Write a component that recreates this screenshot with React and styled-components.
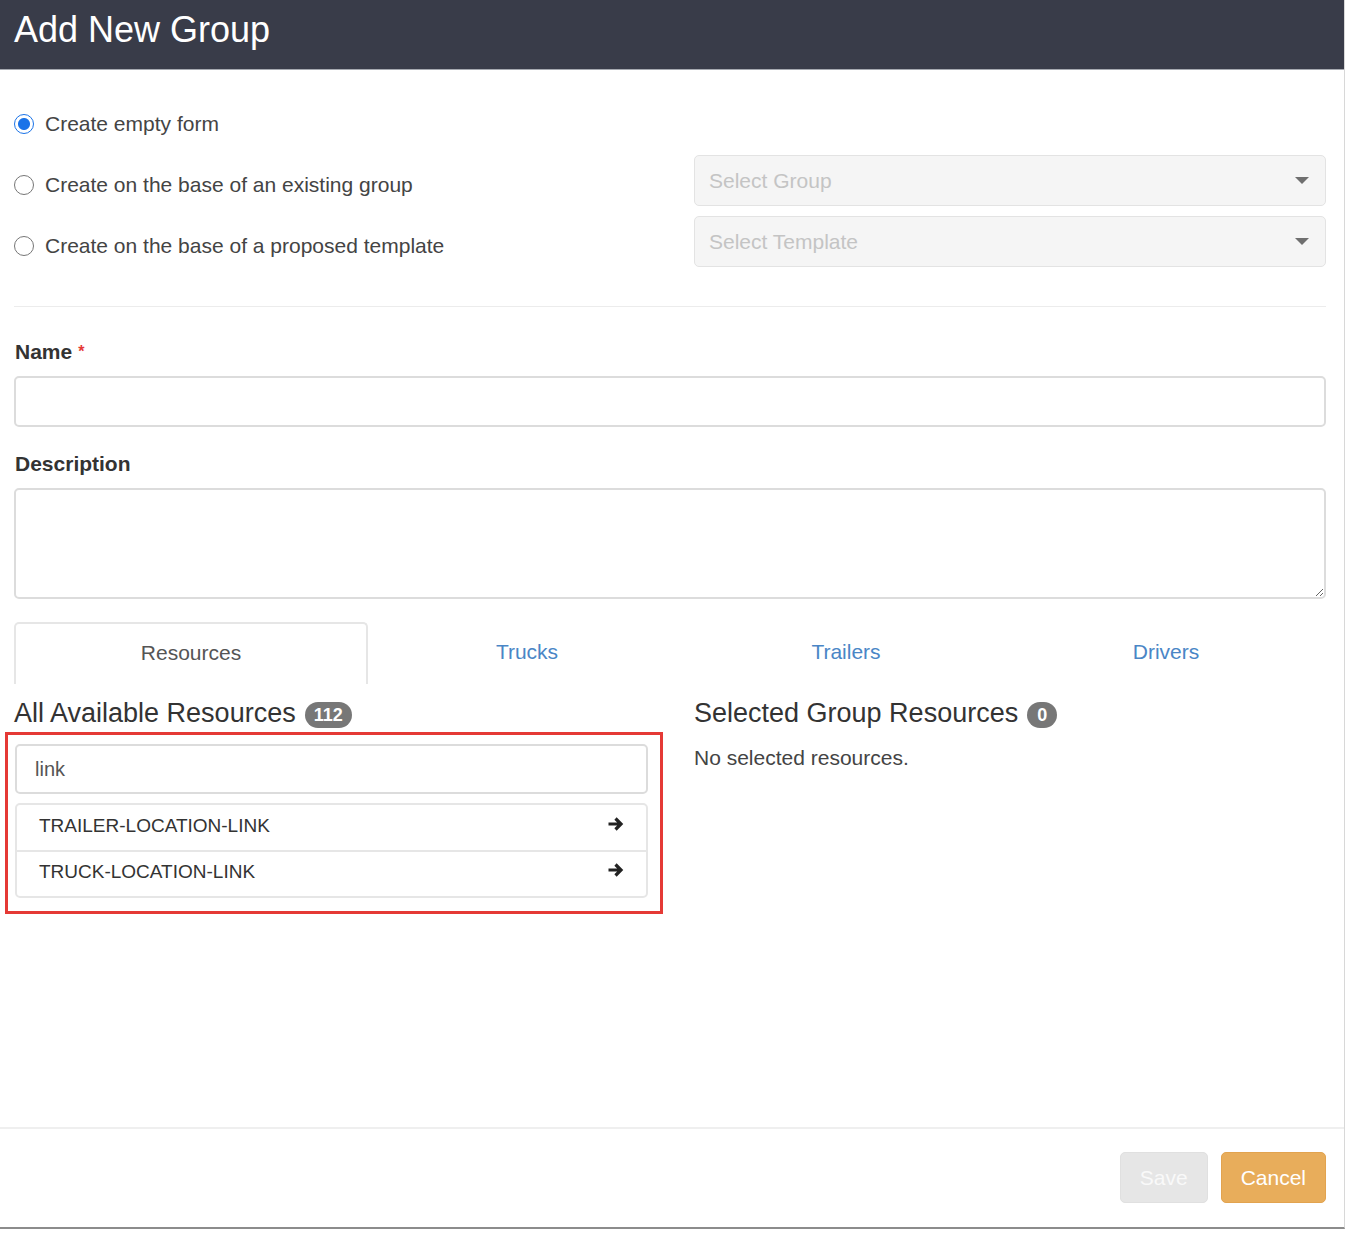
import React, { useState } from 'react';
import styled, { createGlobalStyle } from 'styled-components';

const GlobalStyle = createGlobalStyle`
    body {
        margin: 0;
        background: #ffffff;
        font-family: "Liberation Sans", Arial, sans-serif;
        color: #333;
    }
    * {
        box-sizing: border-box;
    }
`

const Modal = styled.div`
    width: 1345px;
    height: 1229px;
    background: #ffffff;
    border-right: 1px solid #d8d8d8;
    border-bottom: 2px solid #8c8c8c;
    display: flex;
    flex-direction: column;
`

const Header = styled.div`
    height: 70px;
    background-color: #393c49;
    display: flex;
    align-items: center;
    padding: 0 14px 9px;
    border-bottom: 1px solid #a6a9b0;
`

const Title = styled.h1`
    margin: 0;
    font-size: 36px;
    font-weight: 400;
    color: #ffffff;
`

const Body = styled.div`
    flex: 1;
    padding: 24px 18px 0 14px;
`

const SourceGrid = styled.div`
    display: grid;
    grid-template-columns: 680px 1fr;
    grid-auto-rows: 61px;
`

const RadioLabel = styled.label`
    display: flex;
    align-items: center;
    gap: 11px;
    font-size: 21px;
    color: #444;
    align-self: center;
    margin-top: -2px;
    cursor: pointer;
`

const RadioInput = styled.input`
    appearance: none;
    margin: 0;
    width: 20px;
    height: 20px;
    border-radius: 50%;
    border: 1.5px solid ${props => props.checked ? '#1a73e8' : '#767676'};
    background: ${props => props.checked
        ? 'radial-gradient(circle, #1a73e8 0 5.5px, #ffffff 6.5px)'
        : '#ffffff'};
`

const SelectBox = styled.div`
    height: 51px;
    background: #f5f5f5;
    border: 1px solid #e3e3e3;
    border-radius: 5px;
    display: flex;
    align-items: center;
    justify-content: space-between;
    padding: 0 16px 0 14px;
    font-size: 21px;
    color: #c4c4c4;
    align-self: start;
`

const Caret = styled.span`
    width: 0;
    height: 0;
    border-left: 7px solid transparent;
    border-right: 7px solid transparent;
    border-top: 7px solid #6f6f6f;
`

const Divider = styled.hr`
    margin: 29px 0 0;
    border: none;
    border-top: 1px solid #ececec;
`

const FieldLabel = styled.label`
    display: block;
    font-size: 21px;
    font-weight: 700;
    color: #333;
    line-height: 24px;
    margin: ${props => props.first ? '33px' : '25px'} 0 12px 1px;
`

const Required = styled.span`
    color: #e53935;
    margin-left: 6px;
    font-size: 16px;
    vertical-align: top;
`

const TextInput = styled.input`
    display: block;
    width: 100%;
    height: 51px;
    border: 2px solid #dcdcdc;
    border-radius: 5px;
    font-family: inherit;
    font-size: 20px;
    padding: 0 18px;
    color: #555;
    outline: none;
`

const TextArea = styled.textarea`
    display: block;
    width: 100%;
    height: 111px;
    border: 2px solid #dcdcdc;
    border-radius: 5px;
    font-family: inherit;
    font-size: 20px;
    padding: 10px 18px;
    resize: vertical;
    outline: none;
`

const Tabs = styled.div`
    margin-top: 23px;
    display: grid;
    grid-template-columns: 354px 318px 320px 1fr;
    height: 62px;
`

const Tab = styled.div`
    display: flex;
    align-items: center;
    justify-content: center;
    font-size: 21px;
    color: ${props => props.active ? '#555555' : '#4a86c6'};
    border: ${props => props.active ? '2px solid #e6e6e6' : 'none'};
    border-bottom: none;
    border-radius: 5px 5px 0 0;
    padding-bottom: 2px;
`

const Columns = styled.div`
    display: grid;
    grid-template-columns: 634px 632px;
    column-gap: 46px;
`

const Column = styled.div`
    display: flex;
    flex-direction: column;
`

const SectionTitle = styled.h3`
    margin: 13px 0 3px;
    font-size: 27px;
    font-weight: 400;
    line-height: 32px;
    color: #333;
    display: flex;
    align-items: center;
    gap: 9px;
`

const Badge = styled.span`
    display: inline-block;
    background: #777777;
    color: #ffffff;
    font-size: 18px;
    font-weight: 700;
    line-height: 26px;
    height: 26px;
    min-width: 30px;
    text-align: center;
    padding: 0 9px;
    border-radius: 13px;
    margin-top: 4px;
`

const Highlight = styled.div`
    border: 3px solid #e53935;
    margin: 0 -15px 0 -9px;
    padding: 9px 12px 13px 7px;
`

const SearchInput = styled(TextInput)`
    height: 50px;
`

const ResourceList = styled.ul`
    list-style: none;
    margin: 9px 0 0;
    padding: 0;
    border: 2px solid #e6e6e6;
    border-radius: 5px;
`

const ResourceItem = styled.li`
    height: ${props => props.first ? '45px' : '46px'};
    display: flex;
    align-items: center;
    justify-content: space-between;
    padding: 0 22px 4px 22px;
    font-size: 19px;
    color: #333;
    border-top: ${props => props.first ? 'none' : '2px solid #e6e6e6'};
`

const ArrowIcon = styled.svg`
    width: 17px;
    height: 16px;
    margin-top: -4px;
`

const EmptyText = styled.p`
    margin: 14px 0 0;
    font-size: 21px;
    color: #444;
`

const Footer = styled.div`
    border-top: 2px solid #efefef;
    padding: 23px 18px 24px;
    display: flex;
    justify-content: flex-end;
    gap: 13px;
`

const Button = styled.button`
    height: 51px;
    padding: 0 19px;
    font-family: inherit;
    font-size: 21px;
    border-radius: 5px;
    border: 1px solid ${props => props.primary ? '#e2a34f' : '#e0e0e0'};
    background: ${props => props.primary ? '#e8ad5b' : '#e6e6e6'};
    color: ${props => props.primary ? '#ffffff' : '#f9f9f9'};
`

const Arrow = () => (
    <ArrowIcon viewBox="0 0 17 16">
        <path d="M1.5 8 H13.5 M8.5 2.5 L14 8 L8.5 13.5" fill="none" stroke="#222" strokeWidth="3.2" strokeLinejoin="miter" />
    </ArrowIcon>
);

const sources = [
    { id: 'empty', label: 'Create empty form' },
    { id: 'group', label: 'Create on the base of an existing group', select: 'Select Group' },
    { id: 'template', label: 'Create on the base of a proposed template', select: 'Select Template' },
];

const resources = ['TRAILER-LOCATION-LINK', 'TRUCK-LOCATION-LINK'];

const App = () => {
    const [source, setSource] = useState('empty');
    const [search, setSearch] = useState('link');

    return (
        <>
            <GlobalStyle />
            <Modal>
                <Header>
                    <Title>Add New Group</Title>
                </Header>
                <Body>
                    <SourceGrid>
                        {sources.map((s) => (
                            <React.Fragment key={s.id}>
                                <RadioLabel>
                                    <RadioInput type="radio" name="source" checked={source === s.id} onChange={() => setSource(s.id)} />
                                    {s.label}
                                </RadioLabel>
                                {s.select
                                    ? <SelectBox>{s.select}<Caret /></SelectBox>
                                    : <div />}
                            </React.Fragment>
                        ))}
                    </SourceGrid>
                    <Divider />

                    <FieldLabel first>Name<Required>*</Required></FieldLabel>
                    <TextInput />
                    <FieldLabel>Description</FieldLabel>
                    <TextArea />

                    <Tabs>
                        <Tab active>Resources</Tab>
                        <Tab>Trucks</Tab>
                        <Tab>Trailers</Tab>
                        <Tab>Drivers</Tab>
                    </Tabs>

                    <Columns>
                        <Column>
                            <SectionTitle>All Available Resources <Badge>112</Badge></SectionTitle>
                            <Highlight>
                                <SearchInput value={search} onChange={(e) => setSearch(e.target.value)} />
                                <ResourceList>
                                    {resources.map((r, index) => (
                                        <ResourceItem key={r} first={index === 0}>
                                            {r}
                                            <Arrow />
                                        </ResourceItem>
                                    ))}
                                </ResourceList>
                            </Highlight>
                        </Column>
                        <Column>
                            <SectionTitle>Selected Group Resources <Badge>0</Badge></SectionTitle>
                            <EmptyText>No selected resources.</EmptyText>
                        </Column>
                    </Columns>
                </Body>
                <Footer>
                    <Button disabled>Save</Button>
                    <Button primary>Cancel</Button>
                </Footer>
            </Modal>
        </>
    );
};

export default App;
